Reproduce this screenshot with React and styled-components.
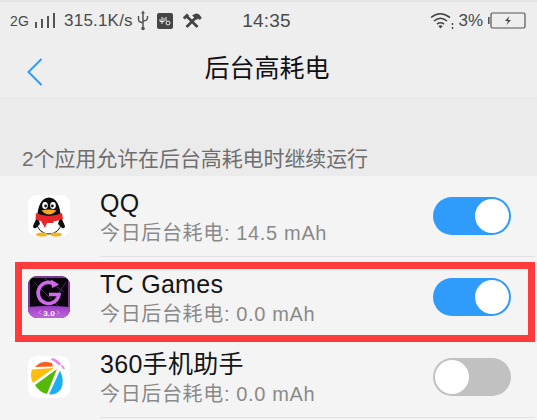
import React from "react";
import styled, { createGlobalStyle } from "styled-components";

const Global = createGlobalStyle`
  html, body { margin: 0; padding: 0; background: #f4f4f4; }
  body { font-family: "Liberation Sans", "Noto Sans CJK SC", sans-serif; overflow: hidden; }
`;

const Page = styled.div`
  position: relative;
  width: 537px;
  height: 420px;
  overflow: hidden;
  background: #f4f4f4;
`;

const Top = styled.div`
  height: 98px;
  background: #eeeeee;
  border-top: 2px solid #e4e4e4;
  box-sizing: border-box;
`;

const StatusBar = styled.div`
  height: 37px;
  padding: 0 11px 0 10px;
  display: grid;
  grid-template-columns: 1fr auto 1fr;
  align-items: center;
  color: #4a4a4a;
`;

const StatusLeft = styled.div`
  display: flex;
  align-items: center;
  font-size: 17px;
  letter-spacing: 0.2px;
`;

const StatusRight = styled.div`
  display: flex;
  align-items: center;
  justify-content: flex-end;
  font-size: 17px;
`;

const Clock = styled.div`
  font-size: 19px;
  letter-spacing: 0.2px;
  margin-left: -3px;
`;

const NetType = styled.span`
  font-size: 14px;
  margin-right: 5px;
`;

const NavBar = styled.div`
  height: 59px;
  display: flex;
  align-items: center;
  justify-content: center;
  position: relative;
  padding-bottom: 6px;
  box-sizing: border-box;
`;

const BackIcon = styled.svg`
  position: absolute;
  left: 27px;
  top: 19px;
`;

const Title = styled.div`
  font-size: 25px;
  color: #111;
  margin-right: 3px;
  font-family: "Noto Sans CJK SC", sans-serif;
`;

const Section = styled.div`
  height: 78px;
  box-sizing: border-box;
  background: #ebebeb;
  border-top: 1px solid #e6e6e6;
  display: flex;
  align-items: flex-end;
  padding: 0 0 3px 22px;
`;

const SectionLabel = styled.div`
  font-size: 21px;
  line-height: 28px;
  color: #6f6f6f;
  letter-spacing: -0.1px;
`;

const Row = styled.div`
  height: 80.5px;
  display: flex;
  align-items: center;
  padding-left: 28px;
  padding-right: 26px;
  position: relative;
  box-sizing: border-box;
  &::after {
    content: "";
    position: absolute;
    left: 100px;
    right: 2px;
    bottom: 0;
    height: 1px;
    background: #e2e2e2;
  }
`;

const IconTile = styled.div`
  width: 42px;
  height: 42px;
  border-radius: 9px;
  background: #fff;
  overflow: hidden;
  flex: none;
`;

const RowText = styled.div`
  flex: 1;
  margin-left: 30px;
  margin-top: 2px;
`;

const Name = styled.div`
  font-size: 25px;
  line-height: 32px;
  color: #151515;
  letter-spacing: 0.3px;
`;

const Sub = styled.div`
  font-size: 20px;
  line-height: 28px;
  color: #8a8a8a;
  letter-spacing: 0.65px;
`;

const Toggle = styled.div`
  width: 78px;
  height: 38px;
  border-radius: 19px;
  box-sizing: border-box;
  padding: 2px;
  flex: none;
  display: flex;
  justify-content: ${(p) => (p.$on ? "flex-end" : "flex-start")};
  background: ${(p) => (p.$on ? "#2f9bfb" : "#c1c1c1")};
`;

const Knob = styled.div`
  width: 34px;
  height: 34px;
  border-radius: 50%;
  background: #fff;
`;

const Highlight = styled.div`
  position: absolute;
  left: 15px;
  top: 262px;
  width: 520px;
  height: 80px;
  box-sizing: border-box;
  border: 7px solid #ff3b3b;
`;

const Bars = () => (
  <svg width="21" height="16" viewBox="0 0 21 16" style={{ marginRight: 9 }}>
    <rect x="1" y="9" width="2" height="6" fill="#555" />
    <rect x="7" y="6" width="2" height="9" fill="#555" />
    <rect x="13" y="3" width="2" height="12" fill="#555" />
    <rect x="19" y="0" width="2" height="15" fill="#555" />
  </svg>
);

const Usb = () => (
  <svg width="12" height="21" viewBox="0 0 12 21" style={{ margin: "0 8px 0 4px" }} fill="none" stroke="#555" strokeWidth="1.5">
    <path d="M6 3v15" />
    <path d="M6 0.5L8 3.5H4z" fill="#555" stroke="none" />
    <circle cx="6" cy="18.5" r="1.8" fill="#555" stroke="none" />
    <path d="M1.5 6v3.5q0 2 2 2.5L6 13M10.5 6v2q0 2-2 2.5L6 11" />
  </svg>
);

const Badge = () => (
  <svg width="16" height="16" viewBox="0 0 16 16" style={{ marginRight: 9 }}>
    <rect width="16" height="16" rx="2" fill="#444" />
    <path d="M5 4v7M3 6v2.5h4V5" stroke="#eee" strokeWidth="1" fill="none" />
    <circle cx="11" cy="10" r="2" stroke="#eee" strokeWidth="1" fill="none" />
    <path d="M9 4v4" stroke="#eee" strokeWidth="1" />
  </svg>
);

const Tools = () => (
  <svg width="20" height="16" viewBox="0 0 20 16" fill="none" stroke="#444">
    <path d="M4 2.5L15.5 14" strokeWidth="2.6" />
    <path d="M1 4.5L5 0.8l1.8 1.8-3.8 3.6z" fill="#444" strokeWidth="0.5" />
    <path d="M15.5 3L4.5 14" strokeWidth="2.6" />
    <path d="M10.5 2.5Q14 -0.5 17 1.5L19.5 5l-1.6 1.6L16 5.5l-1.5 1-2-2z" fill="#444" strokeWidth="0.5" />
  </svg>
);

const Wifi = () => (
  <svg width="24" height="17" viewBox="0 0 24 17" fill="none" stroke="#444" strokeWidth="1.6" style={{ marginRight: 4 }}>
    <path d="M1 5.5Q10 -2 20 5.5" />
    <path d="M4 9Q10.5 3.5 17 9" />
    <path d="M7 12Q10.5 9.5 14 12" />
    <path d="M10.5 16.5l-2.2-2.6q2.2-1.4 4.4 0z" fill="#444" stroke="none" />
    <path d="M22.5 11v2M22.5 15v2" strokeWidth="1.4" />
  </svg>
);

const Battery = () => (
  <svg width="38" height="17" viewBox="0 0 38 17" style={{ marginLeft: 5 }}>
    <rect x="0" y="5" width="1.6" height="7" fill="#555" />
    <rect x="3" y="1" width="34" height="15" rx="1.5" fill="none" stroke="#555" strokeWidth="1.2" />
    <path d="M21.5 4l-4.5 5h3l-1.5 4 4.5-5h-3z" fill="#444" />
  </svg>
);

const QQIcon = () => (
  <svg width="42" height="42" viewBox="0 0 42 42">
    <ellipse cx="21" cy="28" rx="12" ry="11" fill="#fff" stroke="#111" strokeWidth="1" />
    <path d="M9 24Q10 3 21 2.5Q32 3 33 24Q21 20 9 24z" fill="#0d0d0d" />
    <path d="M9.5 21L5 31Q5 34 8 33L12 29zM32.5 21L37 31Q37 34 34 33L30 29z" fill="#111" />
    <ellipse cx="17" cy="10.5" rx="2.8" ry="3.4" fill="#fff" />
    <ellipse cx="25" cy="10.5" rx="2.8" ry="3.4" fill="#fff" />
    <circle cx="17.6" cy="11" r="1.4" fill="#111" />
    <circle cx="24.4" cy="11" r="1.4" fill="#111" />
    <path d="M13.5 15.5Q21 13.5 28.5 15.5Q25 19.5 21 19.5Q17 19.5 13.5 15.5z" fill="#f5a623" />
    <path d="M8 18Q21 24 34 18L35 24Q29 26 26 26L25 28H19L17 33L13 26Q10 26 7.5 24z" fill="#e8262a" />
    <ellipse cx="14" cy="39.5" rx="6" ry="2" fill="#f5b31f" />
    <ellipse cx="28" cy="39.5" rx="6" ry="2" fill="#f5b31f" />
  </svg>
);

const TCIcon = () => (
  <svg width="42" height="42" viewBox="0 0 42 42">
    <defs>
      <linearGradient id="tcBand" x1="0" y1="0" x2="0" y2="1">
        <stop offset="0" stopColor="#9b3fc4" />
        <stop offset="1" stopColor="#c063dc" />
      </linearGradient>
    </defs>
    <rect width="42" height="42" fill="#0a050c" />
    <path d="M0 31Q21 29 42 31V42H0z" fill="url(#tcBand)" />
    <path d="M0 1H42M1 0V31M41 0V31" stroke="#a04ac6" strokeWidth="1.5" />
    <path d="M6 6L30 30M16 2L36 16M26 24L38 6" stroke="#43304a" strokeWidth="1" fill="none" />
    <path d="M27.5 9A10.5 10.5 0 1 0 31 18.5H21" fill="none" stroke="#cf6ae8" strokeWidth="3.6" />
    <path d="M23 3.5l8 5-7 3.5z" fill="#cf6ae8" />
    <text x="21" y="39.5" fontFamily="Roboto, sans-serif" fontSize="8" fontWeight="700" fill="#fff" textAnchor="middle">3.0</text>
    <path d="M13 34.5l-2 2 2 2M29 34.5l2 2-2 2" stroke="#eac4f4" strokeWidth="0.8" fill="none" />
  </svg>
);

const AssistantIcon = () => (
  <svg width="42" height="42" viewBox="0 0 42 42">
    <path d="M7 11Q13 3.5 24 7L25 10.5Q15 10.5 7 11z" fill="#f4611c" />
    <path d="M26 12L4 13.5Q1.5 20 5 27z" fill="#ffbe0b" />
    <path d="M29 13L7 29Q11 36 19 38z" fill="#55b80a" />
    <path d="M32 14.5L21 38.5Q29 39 33 33Q37 25 32 14.5z" fill="#19aef5" />
    <path d="M24 2Q29 3 33 8L31.5 9.5Q27 5.5 23 3.5z" fill="#f07cf0" />
    <path d="M34 8.5Q36 10 37 12.5L35.5 13.5Q34 11.5 33 10z" fill="#e596f0" />
  </svg>
);

const apps = [
  { name: "QQ", usage: "14.5", on: true, Icon: QQIcon },
  { name: "TC Games", usage: "0.0", on: true, Icon: TCIcon },
  { name: "360手机助手", usage: "0.0", on: false, Icon: AssistantIcon },
];

const App = () => {
  return (
    <Page>
      <Global />
      <Top>
        <StatusBar>
          <StatusLeft>
            <NetType>2G</NetType>
            <Bars />
            315.1K/s
            <Usb />
            <Badge />
            <Tools />
          </StatusLeft>
          <Clock>14:35</Clock>
          <StatusRight>
            <Wifi />
            3%
            <Battery />
          </StatusRight>
        </StatusBar>
        <NavBar>
          <BackIcon width="16" height="28" viewBox="0 0 16 28" fill="none" stroke="#2f9bfb" strokeWidth="2">
            <path d="M14.5 1L1.5 14l13 13" />
          </BackIcon>
          <Title>后台高耗电</Title>
        </NavBar>
      </Top>
      <Section>
        <SectionLabel>2个应用允许在后台高耗电时继续运行</SectionLabel>
      </Section>
      {apps.map((app) => (
        <Row key={app.name}>
          <IconTile>
            <app.Icon />
          </IconTile>
          <RowText>
            <Name>{app.name}</Name>
            <Sub>今日后台耗电: {app.usage} mAh</Sub>
          </RowText>
          <Toggle $on={app.on}>
            <Knob />
          </Toggle>
        </Row>
      ))}
      <Highlight />
    </Page>
  );
};

export default App;
